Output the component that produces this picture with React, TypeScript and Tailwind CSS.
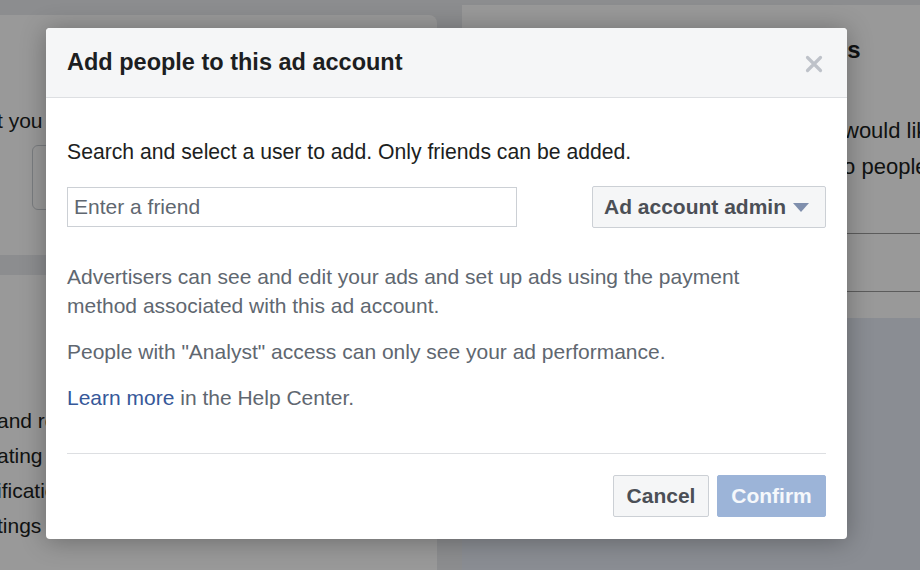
import React from "react";

function Background() {
  return (
    <div className="flex h-[570px] w-[920px] overflow-hidden bg-[#e9ebee] text-[#1c1e21]">
      {/* left column */}
      <div className="flex w-[437px] shrink-0 flex-col gap-[20px] pt-[15px]">
        <div className="h-[240px] rounded-tr-[8px] bg-white px-[32px] pt-[92px]">
          <div className="-ml-[35px] whitespace-nowrap text-[21px] leading-[28px]">t you would like</div>
          <div className="mt-[10px] h-[65px] w-[200px] rounded-[6px] border border-[#ccd0d5]" />
        </div>
        <div className="-ml-[3px] flex-1 whitespace-nowrap bg-white pt-[128px] text-[21px] leading-[35px]">
          <div>and roles</div>
          <div>ating your</div>
          <div>ifications</div>
          <div>tings and</div>
        </div>
      </div>
      {/* right column */}
      <div className="ml-[25px] flex flex-1 flex-col pt-[5px]">
        <div className="flex h-[313px] flex-col bg-white">
          <div className="h-[228px] whitespace-nowrap pl-[356px]">
            <div className="pt-[30px] text-[24px] font-bold leading-[30px]">ons</div>
            <div className="mt-[48px] text-[22px] leading-[36px]">
              <div className="ml-[25px]">would like</div>
              <div className="ml-[19px]">to people</div>
            </div>
          </div>
          <div className="h-[59px] border-y border-[#9a9a9a]" />
        </div>
        <div className="flex-1 bg-[#e6ebf5]" />
      </div>
    </div>
  );
}

export default function App() {
  return (
    <div
      className="relative h-[570px] w-[920px] overflow-hidden"
      style={{ fontFamily: '"Liberation Sans", Arial, sans-serif' }}
    >
      <Background />
      <div className="absolute inset-0 bg-black/40" />

      <div className="absolute left-[46px] top-[28px] flex h-[511px] w-[801px] flex-col overflow-hidden rounded-[4px] bg-white shadow-[0_2px_26px_rgba(0,0,0,0.3)]">
        <div className="flex h-[70px] shrink-0 items-center justify-between border-b border-[#dddfe2] bg-[#f5f6f7] pl-[21px] pr-[24px]">
          <h1 className="text-[23.5px] font-bold text-[#1c1e21]">Add people to this ad account</h1>
          <svg width="18" height="18" viewBox="0 0 18 18" className="mt-[2px]">
            <path d="M2.5 2.5 L15.5 15.5 M15.5 2.5 L2.5 15.5" stroke="#bec2c9" strokeWidth="3.2" strokeLinecap="round" />
          </svg>
        </div>

        <div className="flex flex-1 flex-col px-[21px] pt-[40px]">
          <p className="text-[21.2px] leading-[28px] text-[#1c1e21]">
            Search and select a user to add. Only friends can be added.
          </p>
          <div className="mt-[20px] flex items-center justify-between">
            <input
              className="h-[40px] w-[450px] border border-[#ccd0d5] px-[6px] text-[21px] text-[#1c1e21] placeholder:text-[#606770] outline-none"
              placeholder="Enter a friend"
            />
            <button className="flex h-[42px] w-[234px] items-center gap-[7px] rounded-[2px] border border-[#ccd0d5] bg-[#f5f6f7] pl-[11px] text-[21px] font-bold text-[#4b4f56]">
              Ad account admin
              <svg width="16" height="9" viewBox="0 0 16 9">
                <path d="M0 0 H16 L8 9 Z" fill="#7f8fad" />
              </svg>
            </button>
          </div>

          <div className="mt-[34px] flex max-w-[700px] flex-col gap-[17px] text-[21px] leading-[29px] text-[#606770]">
            <p>
              Advertisers can see and edit your ads and set up ads using the payment method associated with this ad
              account.
            </p>
            <p>People with "Analyst" access can only see your ad performance.</p>
            <p>
              <a className="text-[#365899]">Learn more</a> in the Help Center.
            </p>
          </div>

          <div className="mt-[41px] border-t border-[#dddfe2]" />

          <div className="mt-[21px] flex justify-end gap-[8px]">
            <button className="h-[42px] w-[96px] rounded-[2px] border border-[#ccd0d5] bg-[#f5f6f7] text-[21px] font-bold text-[#4b4f56]">
              Cancel
            </button>
            <button className="h-[42px] w-[109px] rounded-[2px] border border-[#9cb4d8] bg-[#9cb4d8] text-[21px] font-bold text-white/90">
              Confirm
            </button>
          </div>
        </div>
      </div>
    </div>
  );
}
